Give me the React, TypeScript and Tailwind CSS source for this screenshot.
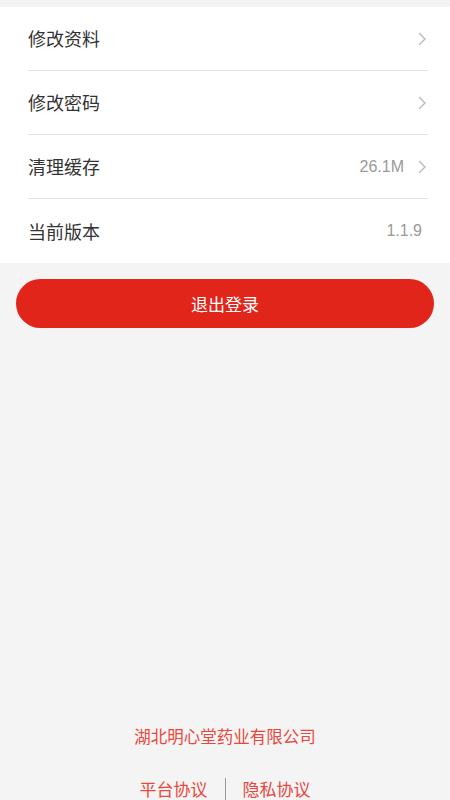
const font = { fontFamily: '"Noto Sans CJK SC", "Noto Sans", sans-serif' };

type Row = { label: string; value?: string; arrow?: boolean };

const rows: Row[] = [
  { label: '修改资料', arrow: true },
  { label: '修改密码', arrow: true },
  { label: '清理缓存', value: '26.1M', arrow: true },
  { label: '当前版本', value: '1.1.9' },
];

function Chevron() {
  return (
    <svg width="9" height="14" viewBox="0 0 9 14" fill="none" className="mr-[1px]">
      <path d="M1.5 1.5 L7 7 L1.5 12.5" stroke="#b8b8b8" strokeWidth="1.4" strokeLinecap="round" strokeLinejoin="round" />
    </svg>
  );
}

export default function App() {
  return (
    <div className="flex h-[800px] flex-col overflow-hidden bg-[#f4f4f4]" style={font}>
      <div className="mt-[7px] bg-white pl-[28px] pr-[22px]">
        {rows.map((row, i) => (
          <div
            key={row.label}
            className={`flex h-[64px] items-center justify-between ${
              i < rows.length - 1 ? 'border-b border-[#e3e3e3]' : ''
            }`}
          >
            <span className="text-[18px] text-[#333333]">{row.label}</span>
            <div className="flex items-center">
              {row.value && (
                <span
                  className={`text-[16px] text-[#9a9a9a] ${row.arrow ? 'mr-[14px]' : 'mr-[6px]'}`}
                  style={{ fontFamily: '"Liberation Sans", Arial, sans-serif' }}
                >
                  {row.value}
                </span>
              )}
              {row.arrow && <Chevron />}
            </div>
          </div>
        ))}
      </div>

      <div className="mt-[16px] px-[16px]">
        <button className="flex h-[49px] w-full items-center justify-center rounded-full bg-[#e1251b] text-[17px] text-white">
          退出登录
        </button>
      </div>

      <div className="flex-1" />

      <div className="flex flex-col items-center">
        <p className="text-[16.5px] text-[#e8473d]">湖北明心堂药业有限公司</p>
        <div className="mt-[29px] flex h-[22px] items-center text-[17px] text-[#e8473d]">
          <span className="pr-[17px]">平台协议</span>
          <span className="h-[22px] w-px bg-[#999999]" />
          <span className="pl-[17px]">隐私协议</span>
        </div>
      </div>
    </div>
  );
}
